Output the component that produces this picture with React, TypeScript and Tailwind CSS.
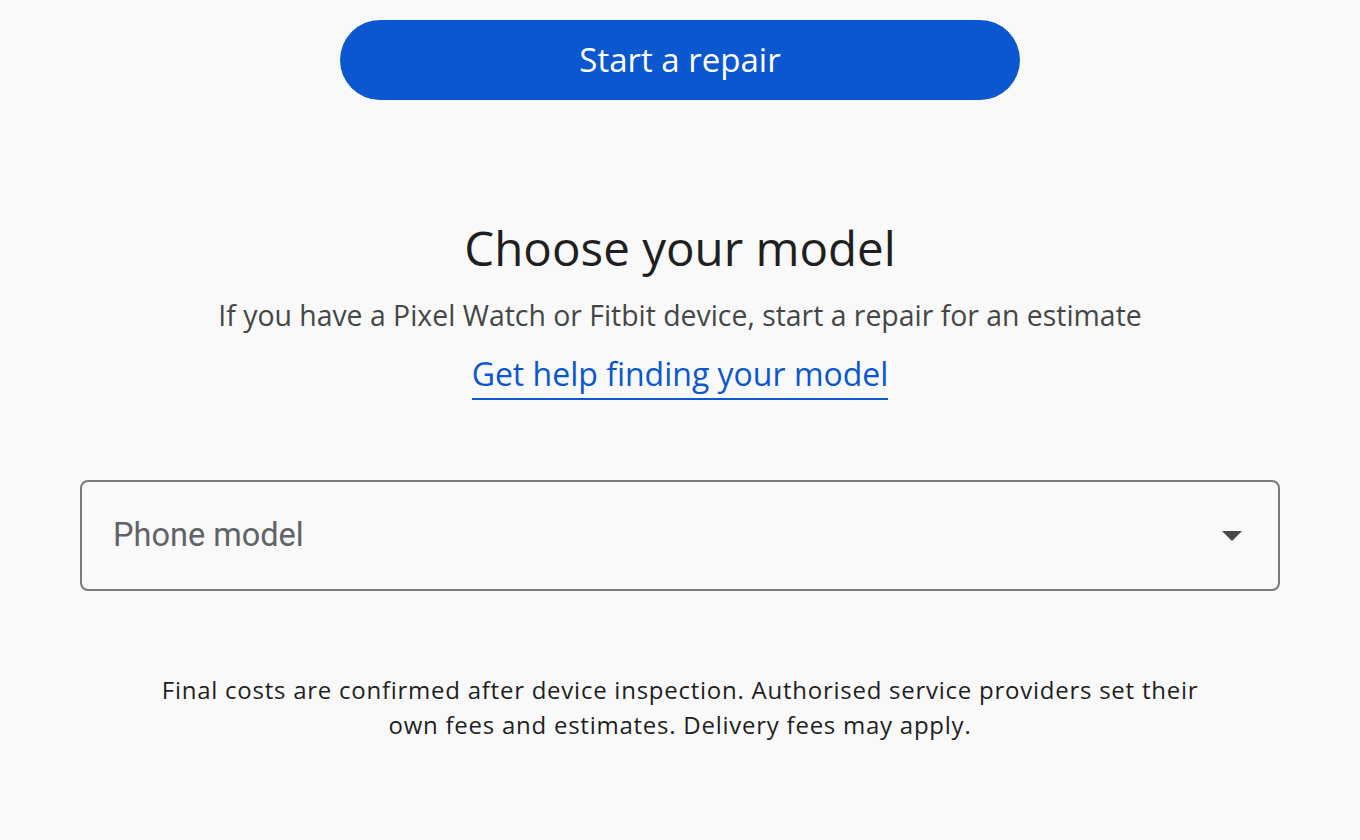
export default function App() {
  return (
    <div
      className="min-h-[840px] w-full bg-[#f9f9f9] text-[#1f1f1f]"
      style={{ fontFamily: '"Open Sans", "Noto Sans", Arial, sans-serif' }}
    >
      <div className="flex flex-col items-center pt-5">
        <button className="h-20 w-[680px] rounded-full bg-[#0b57d0] text-[33px] font-medium text-white">
          Start a repair
        </button>

        <h2 className="mt-[116px] text-[47.5px] leading-[64px] font-normal text-[#1f1f1f]">Choose your model</h2>
        <p className="mt-[16px] text-[28.4px] leading-[38px] text-[#444746]">
          If you have a Pixel Watch or Fitbit device, start a repair for an estimate
        </p>
        <a
          href="#"
          className="mt-[20px] border-b-2 border-[#0b57d0] pb-[4px] text-[32px] leading-[40px] text-[#0b57d0]"
        >
          Get help finding your model
        </a>
      </div>

      <div className="mx-20 mt-[80px] flex h-[111px] items-center justify-between rounded-lg border-2 border-[#7a7a7a] pr-[36px] pl-[31px]">
        <span className="text-[32.5px] text-[#5f6368]" style={{ fontFamily: 'Roboto, Arial, sans-serif' }}>
          Phone model
        </span>
        <svg width="20" height="10" viewBox="0 0 20 10">
          <path d="M0 0h20L10 10z" fill="#474747" />
        </svg>
      </div>

      <p className="mt-[81px] text-center text-[24px] leading-[35px] tracking-[0.75px] text-[#1f1f1f]">
        Final costs are confirmed after device inspection. Authorised service providers set their
        <br />
        own fees and estimates. Delivery fees may apply.
      </p>
    </div>
  )
}
